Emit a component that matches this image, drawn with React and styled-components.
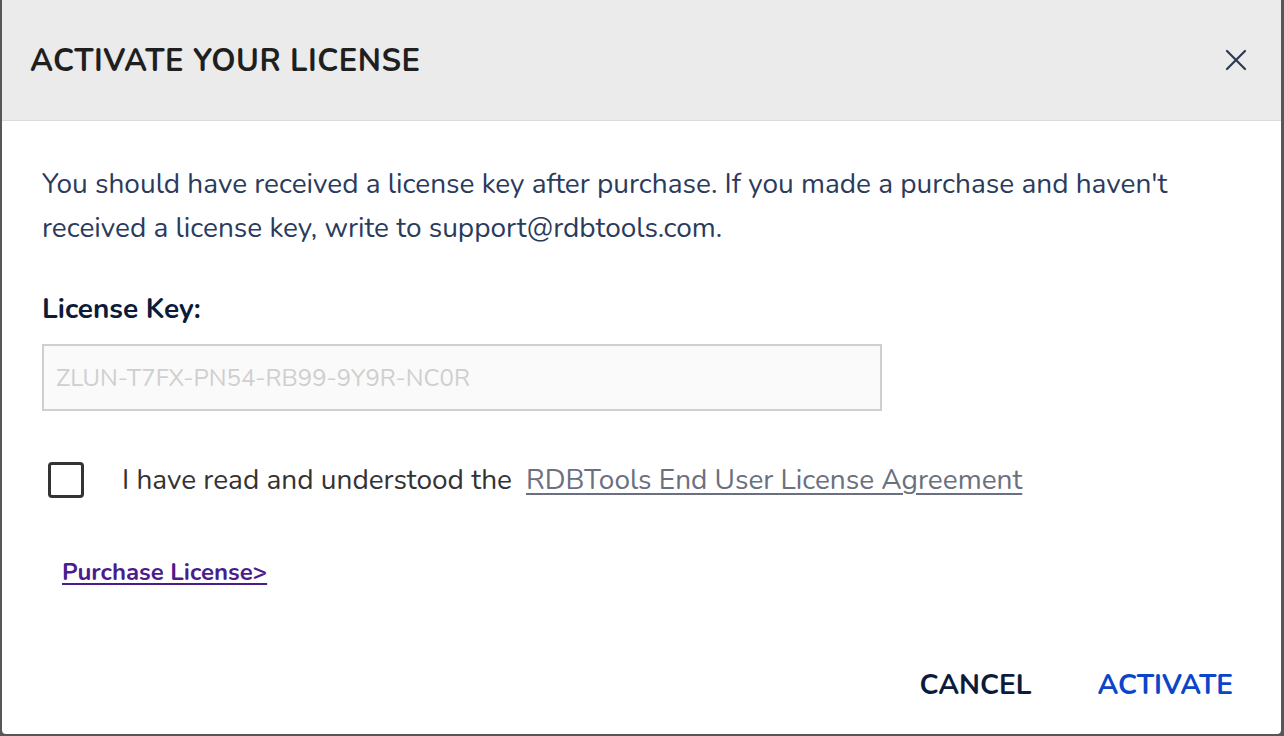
import React from 'react'
import styled, { createGlobalStyle } from 'styled-components'

const GlobalStyle = createGlobalStyle`
    html, body {
        margin: 0;
        padding: 0;
        background: #575757;
        font-family: "Nunito", Lato, "Open Sans", sans-serif;
    }
`

const Backdrop = styled.div`
    height: 736px;
    padding: 0 3px 2px 2px;
    box-sizing: border-box;
    display: flex;
`

const Dialog = styled.div`
    flex: 1;
    background: #ffffff;
    border-radius: 0 0 4px 4px;
    display: flex;
    flex-direction: column;
    overflow: hidden;
`

const Header = styled.div`
    height: 120px;
    background: #ebebeb;
    border-bottom: 1px solid #dcdcdc;
    display: flex;
    align-items: center;
    justify-content: space-between;
    padding: 0 28px;
`

const Title = styled.h2`
    margin: 0;
    margin-top: 2px;
    font-size: 31px;
    font-weight: 700;
    color: #1f1f1f;
    letter-spacing: 0.5px;
`

const CloseButton = styled.button`
    background: none;
    border: none;
    padding: 0;
    margin-right: 5px;
    width: 24px;
    height: 24px;
    display: flex;
    cursor: pointer;
`

const Body = styled.div`
    flex: 1;
    padding: 41px 40px 0 40px;
    display: flex;
    flex-direction: column;
`

const Intro = styled.p`
    margin: 0;
    font-size: 28px;
    line-height: 44px;
    color: #2b3b5c;
`

const Label = styled.label`
    margin-top: 40px;
    font-size: 28px;
    font-weight: 700;
    color: #0c1a3b;
`

const KeyInput = styled.input`
    margin-top: 16px;
    width: 840px;
    height: 67px;
    box-sizing: border-box;
    border: 2px solid #cfcfcf;
    background: #fafafa;
    padding: 0 12px;
    font-family: inherit;
    font-size: 24px;
    color: #333;
    outline: none;

    &::placeholder {
        color: #cfcfcf;
    }
`

const AgreeRow = styled.div`
    margin-top: 50px;
    display: flex;
    align-items: center;
    padding-left: 6px;
    font-size: 28px;
    color: #333333;
`

const Box = styled.span`
    width: 30px;
    height: 30px;
    border: 3px solid #333;
    border-radius: 4px;
    margin-right: 38px;
`

const EulaLink = styled.a`
    margin-left: 14px;
    color: #6b7080;
    text-decoration: underline;
    text-underline-offset: 4px;
`

const PurchaseLink = styled.a`
    margin-top: 57px;
    margin-left: 20px;
    align-self: flex-start;
    font-size: 24px;
    font-weight: 700;
    color: #4b1d8c;
    text-decoration: underline;
    text-underline-offset: 3px;
`

const Footer = styled.div`
    margin-top: auto;
    display: flex;
    justify-content: flex-end;
    gap: 66px;
    padding: 0 8px 30px 0;
`

const ActionButton = styled.button`
    background: none;
    border: none;
    padding: 0;
    font-family: inherit;
    font-size: 28px;
    font-weight: 700;
    color: ${props => props.primary ? '#0b45c9' : '#0c1a3b'};
    cursor: pointer;
`

export default function App() {
    return (
        <>
            <GlobalStyle />
            <Backdrop>
                <Dialog>
                    <Header>
                        <Title>ACTIVATE YOUR LICENSE</Title>
                        <CloseButton aria-label="Close">
                            <svg width="24" height="24" viewBox="0 0 24 24">
                                <path d="M3 3 L21 21 M21 3 L3 21" stroke="#2c3a57" strokeWidth="2.2" strokeLinecap="round" />
                            </svg>
                        </CloseButton>
                    </Header>
                    <Body>
                        <Intro>
                            You should have received a license key after purchase. If you made a purchase and haven't<br />
                            received a license key, write to support@rdbtools.com.
                        </Intro>
                        <Label>License Key:</Label>
                        <KeyInput placeholder="ZLUN-T7FX-PN54-RB99-9Y9R-NC0R" />
                        <AgreeRow>
                            <Box />
                            I have read and understood the
                            <EulaLink href="#">RDBTools End User License Agreement</EulaLink>
                        </AgreeRow>
                        <PurchaseLink href="#">Purchase License&gt;</PurchaseLink>
                        <Footer>
                            <ActionButton>CANCEL</ActionButton>
                            <ActionButton primary>ACTIVATE</ActionButton>
                        </Footer>
                    </Body>
                </Dialog>
            </Backdrop>
        </>
    )
}
